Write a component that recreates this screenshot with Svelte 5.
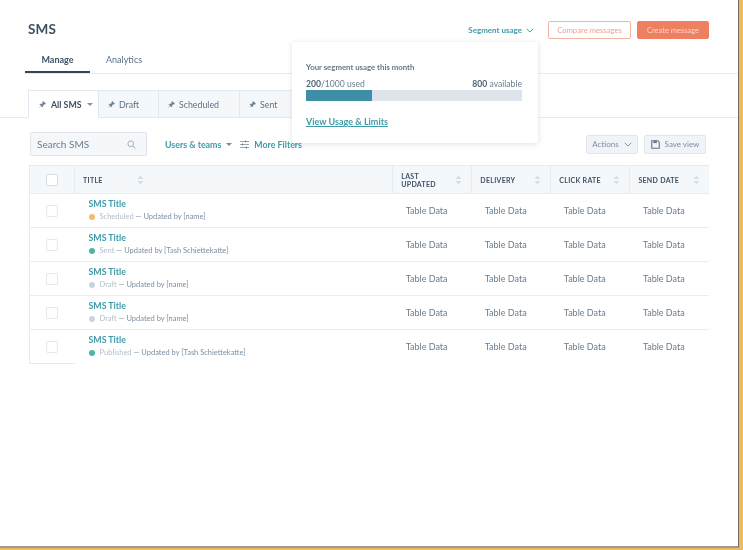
<script>
  const TABS = [
    { label: "All SMS", active: true },
    { label: "Draft" },
    { label: "Scheduled" },
    { label: "Sent" }
  ];

  const COLUMNS = ["Last Updated", "Delivery", "Click Rate", "Send Date"];

  const ROWS = [
    { status: "Scheduled", color: "#f0bc6e", by: "[name]" },
    { status: "Sent", color: "#4db6a2", by: "[Tash Schiettekatte]" },
    { status: "Draft", color: "#cbd3df", by: "[name]" },
    { status: "Draft", color: "#cbd3df", by: "[name]" },
    { status: "Published", color: "#4db6a2", by: "[Tash Schiettekatte]" }
  ];
</script>

{#snippet sort()}
  <svg class="sort" viewBox="0 0 8 12" width="7" height="10" aria-hidden="true">
    <path d="M4 0.5 7.5 4.8H0.5Z M4 11.5 0.5 7.2H7.5Z" fill="#d5dde7" />
  </svg>
{/snippet}

{#snippet chevron(color)}
  <svg viewBox="0 0 10 6" width="8" height="5" aria-hidden="true">
    <path d="M1 1l4 4 4-4" fill="none" stroke={color} stroke-width="1.2" />
  </svg>
{/snippet}

<div class="frame">
  <header class="top">
    <h1>SMS</h1>
    <div class="top-actions">
      <button class="segment">Segment usage {@render chevron("#3f9aa8")}</button>
      <button class="btn outline">Compare messages</button>
      <button class="btn solid">Create message</button>
    </div>
  </header>

  <nav class="main-tabs">
    <span class="main-tab active">Manage</span>
    <span class="main-tab">Analytics</span>
  </nav>

  <div class="view-tabs">
    {#each TABS as tab}
      <div class="view-tab" class:active={tab.active}>
        <svg viewBox="0 0 10 10" width="7" height="7" aria-hidden="true">
          <path d="M6 0.5 9.5 4 8.6 4.6 7.4 4.3 5.6 6.3 5.6 8 4.8 8.4 1.6 5.2 2 4.4 3.7 4.4 5.7 2.6 5.4 1.4Z M3 6.8 0.5 9.5" fill="#6b7f95" stroke="#6b7f95" stroke-width="0.7" />
        </svg>
        <span>{tab.label}</span>
        {#if tab.active}<i class="caret"></i>{/if}
      </div>
    {/each}
  </div>

  <div class="toolbar">
    <div class="search">
      <span>Search SMS</span>
      <svg viewBox="0 0 12 12" width="9" height="9" aria-hidden="true">
        <circle cx="5" cy="5" r="3.8" fill="none" stroke="#8da0b3" stroke-width="1.1" />
        <path d="M8 8l3.3 3.3" stroke="#8da0b3" stroke-width="1.2" />
      </svg>
    </div>
    <span class="filter">Users &amp; teams <i class="caret teal"></i></span>
    <span class="filter more">
      <svg viewBox="0 0 12 12" width="9" height="9" aria-hidden="true">
        <path d="M0 2h12M0 6h12M0 10h12" stroke="#66788a" stroke-width="0.9" />
        <path d="M7.5 0.7v2.6M3.5 4.7v2.6M8.5 8.7v2.6" stroke="#66788a" stroke-width="1.3" />
      </svg>
      More Filters
    </span>
    <div class="toolbar-right">
      <button class="btn-grey">Actions {@render chevron("#7c8fa3")}</button>
      <button class="btn-grey save">
        <svg viewBox="0 0 12 12" width="9" height="9" aria-hidden="true">
          <path d="M1 1h8l2 2v8H1Z" fill="none" stroke="#5f7286" stroke-width="1.4" />
          <path d="M3.2 1.5h4.6v2.6H3.2Z" fill="#5f7286" />
        </svg>
        Save view
      </button>
    </div>
  </div>

  <table>
    <thead>
      <tr>
        <th class="check-col"><span class="box head"></span></th>
        <th class="title-col"><div class="th"><span>Title</span>{@render sort()}</div></th>
        {#each COLUMNS as col}
          <th><div class="th spread"><span>{col}</span>{@render sort()}</div></th>
        {/each}
      </tr>
    </thead>
    <tbody>
      {#each ROWS as row}
        <tr>
          <td class="check-col"><span class="box"></span></td>
          <td class="title-cell">
            <a href="#top">SMS Title</a>
            <div class="meta">
              <i class="dot" style="background: {row.color}"></i>
              <span><span class="status">{row.status}</span> — Updated by {row.by}</span>
            </div>
          </td>
          {#each COLUMNS as col}
            <td class="data">Table Data</td>
          {/each}
        </tr>
      {/each}
    </tbody>
  </table>

  <div class="popover">
    <p class="pop-title">Your segment usage this month</p>
    <div class="pop-row">
      <span><b>200</b>/1000 used</span>
      <span><b>800</b> available</span>
    </div>
    <div class="bar"><div class="bar-fill" style="width: 30.5%"></div></div>
    <a class="pop-link" href="#top">View Usage &amp; Limits</a>
  </div>
</div>

<style>
  :global(body) {
    margin: 0;
    background: #efb95c;
    font-family: Lato, "Open Sans", Arial, sans-serif;
  }

  .frame {
    position: relative;
    box-sizing: border-box;
    width: 739px;
    height: 548px;
    background: #fff;
    border-right: 1px solid #6f6a60;
    border-bottom: 2px solid #9a9a96;
    color: #33475b;
    filter: blur(0.5px);
    overflow: hidden;
  }

  .top {
    display: flex;
    align-items: center;
    justify-content: space-between;
    height: 18px;
    padding: 21px 29px 0 28px;
  }

  h1 {
    margin: -2px 0 0;
    font-size: 13.5px;
    font-weight: 700;
    letter-spacing: 0.2px;
    color: #3d5166;
  }

  .top-actions {
    display: flex;
    align-items: center;
  }

  button {
    font-family: inherit;
    cursor: pointer;
  }

  .segment {
    display: flex;
    align-items: center;
    gap: 4px;
    margin-right: 14px;
    padding: 0;
    border: 0;
    background: none;
    color: #3f9aa8;
    font-size: 8px;
    font-weight: 700;
  }

  .btn {
    height: 18px;
    padding: 0;
    border-radius: 2px;
    font-size: 7.7px;
  }

  .outline {
    width: 83px;
    margin-right: 6px;
    border: 1px solid #f0b6a3;
    background: #fff;
    color: #eda48c;
  }

  .solid {
    width: 72px;
    border: 1px solid #ee7f61;
    background: #ee7f61;
    color: #fbd5c9;
    font-size: 7.5px;
  }

  .main-tabs {
    display: flex;
    height: 34px;
    margin: 0 0 0 25px;
    border-bottom: 1px solid #e4ebf2;
  }

  .main-tab {
    box-sizing: border-box;
    height: 34px;
    padding-top: 15px;
    font-size: 9px;
    color: #5d7186;
  }

  .main-tab:last-child {
    margin-left: 16px;
  }

  .main-tab.active {
    width: 65px;
    text-align: center;
    font-weight: 700;
    color: #3d5166;
    border-bottom: 2px solid #33475b;
  }

  .view-tabs {
    display: flex;
    box-sizing: border-box;
    height: 28px;
    margin-top: 16px;
    padding-left: 28px;
    border-bottom: 1px solid #e4ebf2;
  }

  .view-tab {
    display: flex;
    align-items: center;
    gap: 4px;
    box-sizing: border-box;
    height: 28px;
    padding-left: 9px;
    width: 60px;
    background: #f5f8fa;
    border: 1px solid #e1e8ef;
    border-left: 0;
    font-size: 8.8px;
    color: #5d7186;
  }

  .view-tab:nth-child(3) { width: 81px; }
  .view-tab:nth-child(4) { width: 60px; }

  .view-tab.active {
    width: 71px;
    gap: 5px;
    padding-left: 10px;
    background: #fff;
    border-left: 1px solid #e1e8ef;
    border-bottom-color: #fff;
    font-weight: 700;
    color: #3d5166;
  }

  .caret {
    display: inline-block;
    margin-left: 0;
    border: 3px solid transparent;
    border-top: 3px solid #8095a8;
    border-bottom: 0;
  }

  .caret.teal { border-top-color: #6f8ea0; margin-left: 3px; }

  .toolbar {
    display: flex;
    align-items: center;
    height: 24px;
    margin: 14px 32px 0 30px;
  }

  .search {
    display: flex;
    align-items: center;
    justify-content: space-between;
    box-sizing: border-box;
    width: 117px;
    height: 24px;
    padding: 0 10px 0 6px;
    background: #f5f8fa;
    border: 1px solid #dfe6ee;
    border-radius: 2px;
    font-size: 10px;
    color: #6a7c8e;
  }

  .filter {
    display: flex;
    align-items: center;
    gap: 2px;
    margin-left: 18px;
    font-size: 8.8px;
    font-weight: 700;
    color: #3f9aa8;
  }

  .filter.more {
    gap: 5px;
    margin-left: 8px;
  }

  .toolbar-right {
    display: flex;
    gap: 6px;
    margin-left: auto;
  }

  .btn-grey {
    display: flex;
    align-items: center;
    justify-content: center;
    gap: 5px;
    box-sizing: border-box;
    width: 52px;
    height: 19px;
    padding: 0;
    background: #f0f3f7;
    border: 1px solid #dfe6ee;
    border-radius: 2px;
    font-size: 8px;
    color: #7c8fa3;
  }

  .btn-grey.save { width: 62px; }

  table {
    width: 680px;
    margin: 9px 0 0 29px;
    border-collapse: collapse;
    table-layout: fixed;
  }

  th {
    box-sizing: border-box;
    width: 79px;
    height: 28px;
    padding: 0 9px 0 8px;
    background: #f5f8fa;
    border: 1px solid #e4ebf2;
    border-width: 1px 0 1px 1px;
    text-align: left;
    text-transform: uppercase;
    font-size: 7px;
    line-height: 8px;
    font-weight: 700;
    letter-spacing: 0.3px;
    color: #3d5166;
  }

  th.check-col { width: 45px; padding: 0; text-align: center; }
  th.title-col { width: 318px; }

  .th {
    display: flex;
    align-items: center;
    gap: 34px;
  }

  .th.spread {
    justify-content: space-between;
    gap: 4px;
  }

  .sort { flex: none; }

  td {
    height: 34px;
    padding: 0;
    box-sizing: border-box;
    border-bottom: 1px solid #e9eef3;
  }

  tbody tr:last-child td { border-bottom: 0; }
  tbody tr:last-child td.check-col { border-bottom: 1px solid #e4ebf2; }

  td.check-col {
    text-align: center;
    border-left: 1px solid #e4ebf2;
  }

  .box {
    display: block;
    box-sizing: border-box;
    width: 12px;
    height: 12px;
    margin: 0 auto;
    background: #fff;
    border: 1px solid #e3e9f0;
    border-radius: 2px;
  }

  .box.head { border-color: #d5dde7; }

  td.title-cell {
    padding: 4px 0 0 14px;
    vertical-align: top;
  }

  a {
    color: #3f9aa8;
    font-size: 8.8px;
    line-height: 11px;
    font-weight: 700;
    text-decoration: none;
  }

  .title-cell a { display: block; }

  .meta {
    display: flex;
    align-items: center;
    margin-top: 2px;
    font-size: 7.5px;
    line-height: 11px;
    color: #7c8fa3;
  }

  .dot {
    width: 6px;
    height: 6px;
    margin-right: 5px;
    border-radius: 50%;
  }

  .status { color: #b2bfcc; }

  .data {
    padding-left: 13px;
    font-size: 9px;
    color: #6a7c8e;
  }

  .popover {
    position: absolute;
    top: 42px;
    left: 292px;
    box-sizing: border-box;
    width: 246px;
    height: 101px;
    padding: 20px 16px 0 14px;
    background: #fff;
    box-shadow: 0 1px 5px rgba(80, 100, 125, 0.2);
    font-size: 8.6px;
    color: #6a7c8e;
  }

  .pop-title {
    margin: 0 0 7px;
    font-size: 7.8px;
    font-weight: 700;
    color: #66788a;
  }

  .pop-row {
    display: flex;
    justify-content: space-between;
    line-height: 11px;
  }

  .pop-row b { color: #4f6377; }

  .bar {
    height: 11px;
    background: #dfe4ec;
  }

  .bar-fill {
    height: 100%;
    background: #3f8ea8;
  }

  .pop-link {
    display: inline-block;
    margin-top: 15px;
    font-size: 9px;
    text-decoration: underline;
  }
</style>
